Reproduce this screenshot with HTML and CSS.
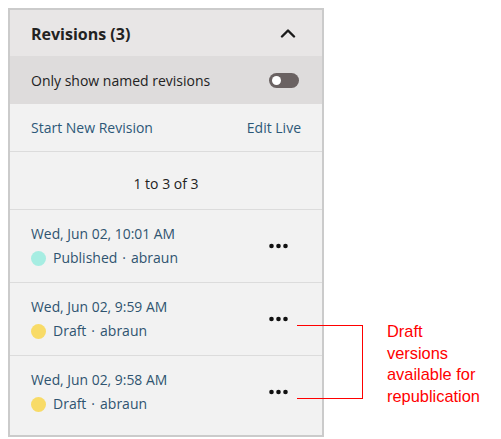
FILE: index.html
```html
<!DOCTYPE html>
<html>
<head>
<meta charset="utf-8">
<link rel="stylesheet" href="styles.css">
</head>
<body>
<div class="page">
  <section class="panel">
    <header class="panel-head">
      <h2 class="panel-title">Revisions (3)</h2>
      <svg class="chevron" width="16" height="10" viewBox="0 0 16 10"><path d="M2 8.5 L8 2.5 L14 8.5" fill="none" stroke="#1a1a1a" stroke-width="2.4" stroke-linecap="round" stroke-linejoin="round"/></svg>
    </header>
    <div class="filter-row">
      <span>Only show named revisions</span>
      <span class="toggle"><span class="knob"></span></span>
    </div>
    <div class="links-row">
      <a class="link">Start New Revision</a>
      <a class="link">Edit Live</a>
    </div>
    <div class="pager">1 to 3 of 3</div>
    <ul class="revisions">
      <li class="rev">
        <div class="rev-info">
          <div class="rev-date">Wed, Jun 02, 10:01 AM</div>
          <div class="rev-status"><span class="dot dot-pub"></span>Published<span class="sep">·</span>abraun</div>
        </div>
        <svg class="more" width="20" height="6" viewBox="0 0 20 6"><circle cx="2.5" cy="3" r="2.3"/><circle cx="9.5" cy="3" r="2.3"/><circle cx="16.5" cy="3" r="2.3"/></svg>
      </li>
      <li class="rev">
        <div class="rev-info">
          <div class="rev-date">Wed, Jun 02, 9:59 AM</div>
          <div class="rev-status"><span class="dot dot-draft"></span>Draft<span class="sep">·</span>abraun</div>
        </div>
        <svg class="more" width="20" height="6" viewBox="0 0 20 6"><circle cx="2.5" cy="3" r="2.3"/><circle cx="9.5" cy="3" r="2.3"/><circle cx="16.5" cy="3" r="2.3"/></svg>
      </li>
      <li class="rev">
        <div class="rev-info">
          <div class="rev-date">Wed, Jun 02, 9:58 AM</div>
          <div class="rev-status"><span class="dot dot-draft"></span>Draft<span class="sep">·</span>abraun</div>
        </div>
        <svg class="more" width="20" height="6" viewBox="0 0 20 6"><circle cx="2.5" cy="3" r="2.3"/><circle cx="9.5" cy="3" r="2.3"/><circle cx="16.5" cy="3" r="2.3"/></svg>
      </li>
    </ul>
  </section>
  <div class="bracket"></div>
  <div class="note">Draft<br>versions<br>available for<br>republication</div>
</div>
</body>
</html>
```
FILE: styles.css
```css
* { box-sizing: border-box; }
html, body { margin: 0; padding: 0; background: #ffffff; }
.page {
  position: relative;
  padding: 8px;
  width: 501px;
  height: 439px;
  font-family: "Open Sans", "DejaVu Sans", sans-serif;
}
.panel {
  width: 316px;
  border: 2px solid #cbcbcb;
  background: #f2f2f2;
  padding-bottom: 7px;
}
.panel-head {
  height: 46px;
  background: #e8e6e6;
  display: flex;
  align-items: center;
  justify-content: space-between;
  padding: 0 26px 0 21px;
}
.panel-title {
  margin: 0;
  font-size: 16px;
  font-weight: 700;
  color: #222222;
  padding-top: 2px;
}
.chevron { display: block; }
.filter-row {
  height: 48px;
  background: #dedcdc;
  display: flex;
  align-items: center;
  justify-content: space-between;
  padding: 0 23px 0 21px;
  font-size: 14px;
  color: #222222;
}
.toggle {
  width: 30px;
  height: 15px;
  border-radius: 8px;
  background: #6a6262;
  position: relative;
  display: block;
}
.knob {
  position: absolute;
  left: 3px;
  top: 3px;
  width: 9px;
  height: 9px;
  border-radius: 50%;
  background: #ffffff;
}
.links-row {
  height: 48px;
  display: flex;
  align-items: center;
  justify-content: space-between;
  padding: 0 21px;
  border-bottom: 1px solid #dcdcdc;
  font-size: 14px;
}
.link { color: #2d5878; text-decoration: none; }
.pager {
  height: 58px;
  display: flex;
  align-items: center;
  justify-content: center;
  padding-top: 5px;
  border-bottom: 1px solid #dcdcdc;
  font-size: 14px;
  color: #222222;
}
.revisions { list-style: none; margin: 0; padding: 0; }
.rev {
  height: 73px;
  display: flex;
  align-items: center;
  justify-content: space-between;
  padding: 0 33px 0 21px;
  border-bottom: 1px solid #dcdcdc;
}
.rev:last-child { border-bottom: none; height: 72px; }
.rev-info { display: flex; flex-direction: column; gap: 4px; }
.rev-date {
  font-size: 13.9px;
  line-height: 20px;
  color: #2f5470;
}
.rev-status {
  display: flex;
  align-items: center;
  font-size: 14px;
  line-height: 20px;
  color: #2f5470;
}
.dot {
  width: 15px;
  height: 15px;
  border-radius: 50%;
  margin-right: 7px;
  display: block;
}
.dot-pub { background: #a6ede2; }
.dot-draft { background: #f8db67; }
.sep { margin: 0 5px; }
.more { display: block; fill: #111111; }
.bracket {
  position: absolute;
  left: 297px;
  top: 325px;
  width: 66px;
  height: 74px;
  border: 1.5px solid #ff0000;
  border-left: none;
}
.note {
  position: absolute;
  left: 387px;
  top: 321px;
  font-family: "Liberation Sans", Arial, sans-serif;
  font-size: 16.4px;
  line-height: 21.5px;
  color: #ff0000;
}
```
